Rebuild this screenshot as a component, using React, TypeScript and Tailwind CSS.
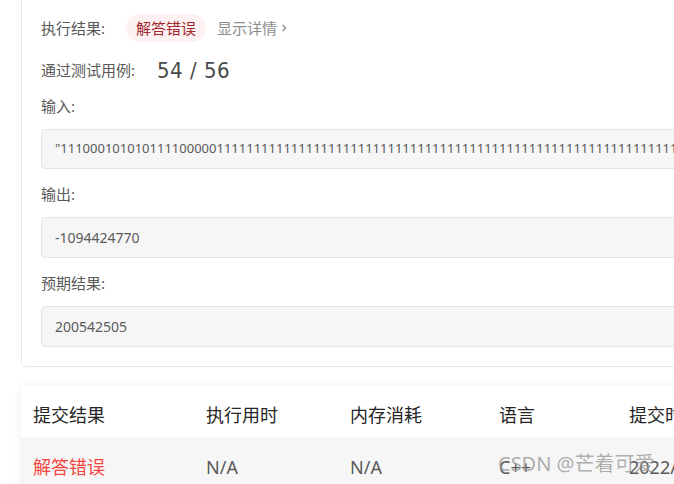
import React from "react";

const font = { fontFamily: '"Noto Sans", "Noto Sans CJK SC", sans-serif' };

const longInput =
  '"111000101010111100000111111111111111111111111111111111111111111111111111111111111111111111111111111111111111';

function Label({ children }: { children: React.ReactNode }) {
  return <div className="h-[20px] flex items-center text-[15px] text-[#595959]">{children}</div>;
}

function Box({ children, h, size }: { children: React.ReactNode; h: string; size: string }) {
  return (
    <div
      className={`${h} ${size} mt-[13px] flex items-center rounded-[4px] border border-[#e4e4e4] bg-[#f6f6f6] pl-[13px] text-[#5a5a5a] whitespace-nowrap overflow-hidden`}
    >
      {children}
    </div>
  );
}

export default function App() {
  return (
    <div className="w-[674px] h-[484px] overflow-hidden bg-white relative" style={font}>
      <div className="ml-[21px] w-[900px] -mt-[8px] rounded-[5px] border border-[#e8e8e8] pt-[21px] pb-[19px] pl-[19px] pr-[20px]">
        <div className="h-[28px] flex items-center text-[15px]">
          <span className="text-[#595959] w-[85px]">执行结果:</span>
          <span className="h-[28px] px-[10px] flex items-center rounded-full bg-[#fdf1f1] text-[#a0262b]">解答错误</span>
          <span className="ml-[11px] text-[#8c8c8c] flex items-center">
            显示详情
            <svg width="10" height="10" viewBox="0 0 10 10" className="ml-[2px]">
              <path d="M3.5 2 L6.5 5 L3.5 8" stroke="#8c8c8c" strokeWidth="1.3" fill="none" />
            </svg>
          </span>
        </div>
        <div className="h-[28px] mt-[14px] flex items-center">
          <span className="text-[15px] text-[#595959] w-[116px]">通过测试用例:</span>
          <span className="text-[22px] font-medium text-[#4a4a4a] tracking-[0.5px]" style={{ fontFamily: '"DejaVu Sans Condensed", "Noto Sans", sans-serif' }}>
            54 / 56
          </span>
        </div>
        <div className="mt-[12px]">
          <Label>输入:</Label>
        </div>
        <Box h="h-[40px]" size="text-[13px]">{longInput}</Box>
        <div className="mt-[15px]">
          <Label>输出:</Label>
        </div>
        <Box h="h-[41px]" size="text-[14px]">-1094424770</Box>
        <div className="mt-[15px]">
          <Label>预期结果:</Label>
        </div>
        <Box h="h-[41px]" size="text-[14px]">200542505</Box>
      </div>

      <div className="ml-[21px] mt-[19px] w-[900px] bg-white shadow-[0_0_8px_rgba(0,0,0,0.07)]">
        <div className="h-[53px] flex items-center pt-[6px] text-[18px] text-[#262626] border-b border-[#f0f0f0]">
          <div className="w-[185px] pl-[12px]">提交结果</div>
          <div className="w-[144px]">执行用时</div>
          <div className="w-[149px]">内存消耗</div>
          <div className="w-[130px]">语言</div>
          <div className="flex-1">提交时间</div>
        </div>
        <div className="h-[56px] flex items-center text-[18px] text-[#595959] bg-[#f6f6f6]">
          <div className="w-[185px] pl-[12px] text-[#f5453f]">解答错误</div>
          <div className="w-[144px]">N/A</div>
          <div className="w-[149px]">N/A</div>
          <div className="w-[130px]">C++</div>
          <div className="flex-1">2022/05/01 10:00</div>
        </div>
      </div>

      <div className="absolute left-[498px] top-[452px] text-[20px] leading-[24px] text-[#9a9a9a]/80 whitespace-nowrap">
        CSDN @芒着可爱
      </div>
    </div>
  );
}
